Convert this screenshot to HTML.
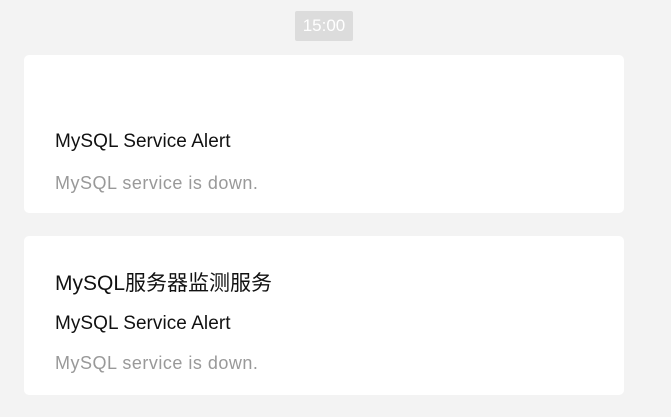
<!DOCTYPE html>
<html><head><meta charset="utf-8"><style>
body{margin:0;width:671px;height:417px;background:#f3f3f3;position:relative;overflow:hidden;font-family:"Liberation Sans","Noto Sans CJK SC",sans-serif;}
.time{position:absolute;left:295px;top:11px;width:58px;height:30px;background:#dcdcdc;color:#fff;font-size:17px;line-height:30px;text-align:center;border-radius:2px;}
.card{position:absolute;left:24px;width:600px;background:#fff;border-radius:5px;}
.t{position:absolute;left:31px;font-size:19px;color:#111;letter-spacing:0.05px;}
.d{position:absolute;left:31px;font-size:18px;color:#999;letter-spacing:0.5px;}
</style></head><body>
<div class="time">15:00</div>
<div class="card" style="top:55px;height:158px;">
<div class="t" style="top:76px">MySQL Service Alert</div>
<div class="d" style="top:118px">MySQL service is down.</div>
</div>
<div class="card" style="top:236px;height:159px;">
<div class="t" style="top:31px;font-size:21px;letter-spacing:0">MySQL服务器监测服务</div>
<div class="t" style="top:77px">MySQL Service Alert</div>
<div class="d" style="top:117px">MySQL service is down.</div>
</div>
</body></html>
